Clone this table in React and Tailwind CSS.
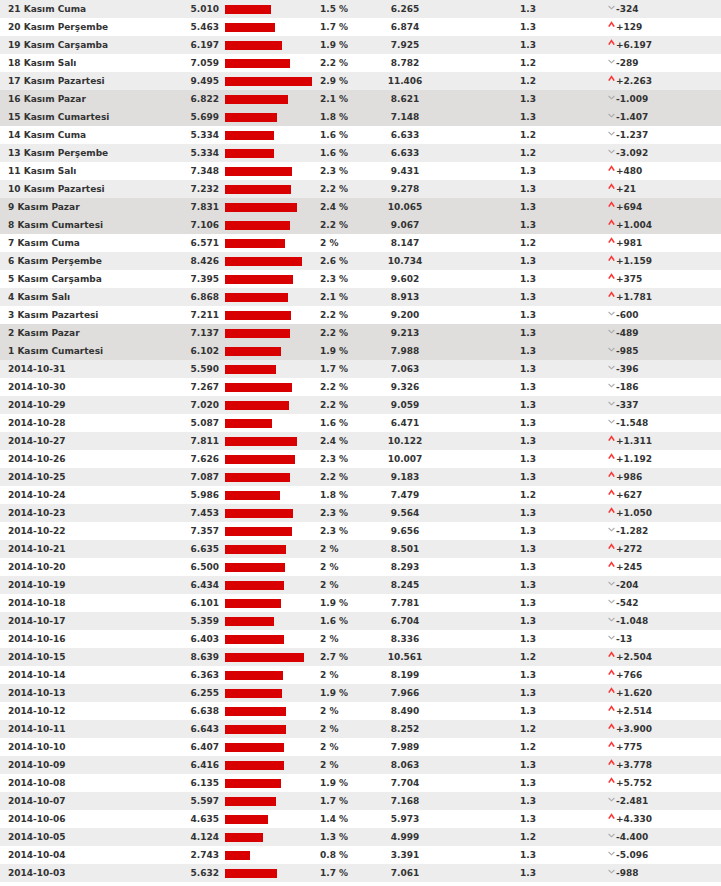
const ROWS = `21 Kasım Cuma|5.010|1.5 %|6.265|1.3|-324
20 Kasım Perşembe|5.463|1.7 %|6.874|1.3|+129
19 Kasım Carşamba|6.197|1.9 %|7.925|1.3|+6.197
18 Kasım Salı|7.059|2.2 %|8.782|1.2|-289
17 Kasım Pazartesi|9.495|2.9 %|11.406|1.2|+2.263
16 Kasım Pazar|6.822|2.1 %|8.621|1.3|-1.009
15 Kasım Cumartesi|5.699|1.8 %|7.148|1.3|-1.407
14 Kasım Cuma|5.334|1.6 %|6.633|1.2|-1.237
13 Kasım Perşembe|5.334|1.6 %|6.633|1.2|-3.092
11 Kasım Salı|7.348|2.3 %|9.431|1.3|+480
10 Kasım Pazartesi|7.232|2.2 %|9.278|1.3|+21
9 Kasım Pazar|7.831|2.4 %|10.065|1.3|+694
8 Kasım Cumartesi|7.106|2.2 %|9.067|1.3|+1.004
7 Kasım Cuma|6.571|2 %|8.147|1.2|+981
6 Kasım Perşembe|8.426|2.6 %|10.734|1.3|+1.159
5 Kasım Carşamba|7.395|2.3 %|9.602|1.3|+375
4 Kasım Salı|6.868|2.1 %|8.913|1.3|+1.781
3 Kasım Pazartesi|7.211|2.2 %|9.200|1.3|-600
2 Kasım Pazar|7.137|2.2 %|9.213|1.3|-489
1 Kasım Cumartesi|6.102|1.9 %|7.988|1.3|-985
2014-10-31|5.590|1.7 %|7.063|1.3|-396
2014-10-30|7.267|2.2 %|9.326|1.3|-186
2014-10-29|7.020|2.2 %|9.059|1.3|-337
2014-10-28|5.087|1.6 %|6.471|1.3|-1.548
2014-10-27|7.811|2.4 %|10.122|1.3|+1.311
2014-10-26|7.626|2.3 %|10.007|1.3|+1.192
2014-10-25|7.087|2.2 %|9.183|1.3|+986
2014-10-24|5.986|1.8 %|7.479|1.2|+627
2014-10-23|7.453|2.3 %|9.564|1.3|+1.050
2014-10-22|7.357|2.3 %|9.656|1.3|-1.282
2014-10-21|6.635|2 %|8.501|1.3|+272
2014-10-20|6.500|2 %|8.293|1.3|+245
2014-10-19|6.434|2 %|8.245|1.3|-204
2014-10-18|6.101|1.9 %|7.781|1.3|-542
2014-10-17|5.359|1.6 %|6.704|1.3|-1.048
2014-10-16|6.403|2 %|8.336|1.3|-13
2014-10-15|8.639|2.7 %|10.561|1.2|+2.504
2014-10-14|6.363|2 %|8.199|1.3|+766
2014-10-13|6.255|1.9 %|7.966|1.3|+1.620
2014-10-12|6.638|2 %|8.490|1.3|+2.514
2014-10-11|6.643|2 %|8.252|1.2|+3.900
2014-10-10|6.407|2 %|7.989|1.2|+775
2014-10-09|6.416|2 %|8.063|1.3|+3.778
2014-10-08|6.135|1.9 %|7.704|1.3|+5.752
2014-10-07|5.597|1.7 %|7.168|1.3|-2.481
2014-10-06|4.635|1.4 %|5.973|1.3|+4.330
2014-10-05|4.124|1.3 %|4.999|1.2|-4.400
2014-10-04|2.743|0.8 %|3.391|1.3|-5.096
2014-10-03|5.632|1.7 %|7.061|1.3|-988`
  .split("\n")
  .map((line) => {
    const [day, hits, share, views, ratio, change] = line.split("|");
    return { day, hits, share, views, ratio, change };
  });

// small trend marks drawn over the full row height so they sit near the cap line
function TrendArrow({ up }) {
  if (up) {
    return (
      <svg width="7" height="18" viewBox="0 0 7 18" className="shrink-0">
        <path d="M0.8 8.6 L3.5 4.6 L6.2 8.6" fill="none" stroke="#ff3333" strokeWidth="1.6" />
      </svg>
    );
  }
  return (
    <svg width="7" height="18" viewBox="0 0 7 18" className="shrink-0">
      <path d="M0.6 6 L3.5 8.8 L6.4 6" fill="none" stroke="#aaaaaa" strokeWidth="1.1" />
    </svg>
  );
}

function StatRow({ row, index }) {
  const weekend = /Pazar$|Cumartesi$/.test(row.day);
  const bg = weekend ? "bg-[#dfdedc]" : index % 2 === 0 ? "bg-[#ededed]" : "bg-white";
  // bar length follows the daily count (about 9.17px per thousand)
  const barWidth = Math.round(parseFloat(row.hits) * 9.17);
  const up = row.change.startsWith("+");

  return (
    <div className={`flex h-[18px] items-center leading-[18px] ${bg}`}>
      <div className="w-[150px] pl-2 whitespace-nowrap">{row.day}</div>
      <div className="w-[69px] text-right">{row.hits}</div>
      <div className="ml-[6px] w-[95px]">
        <div className="h-[9px] bg-[#d80000]" style={{ width: barWidth }} />
      </div>
      <div className="w-[50px] whitespace-nowrap">{row.share}</div>
      <div className="w-[70px] text-center">{row.views}</div>
      <div className="w-[166px] pl-[80px]">{row.ratio}</div>
      <div className="flex items-center gap-px pl-[2px]">
        <TrendArrow up={up} />
        <span>{row.change}</span>
      </div>
    </div>
  );
}

export default function App() {
  return (
    <div className="w-[721px] min-h-[886px] bg-white font-['Verdana','DejaVu_Sans',sans-serif] text-[9px] font-bold text-[#333333]">
      {ROWS.map((row, i) => (
        <StatRow key={row.day} row={row} index={i} />
      ))}
    </div>
  );
}
